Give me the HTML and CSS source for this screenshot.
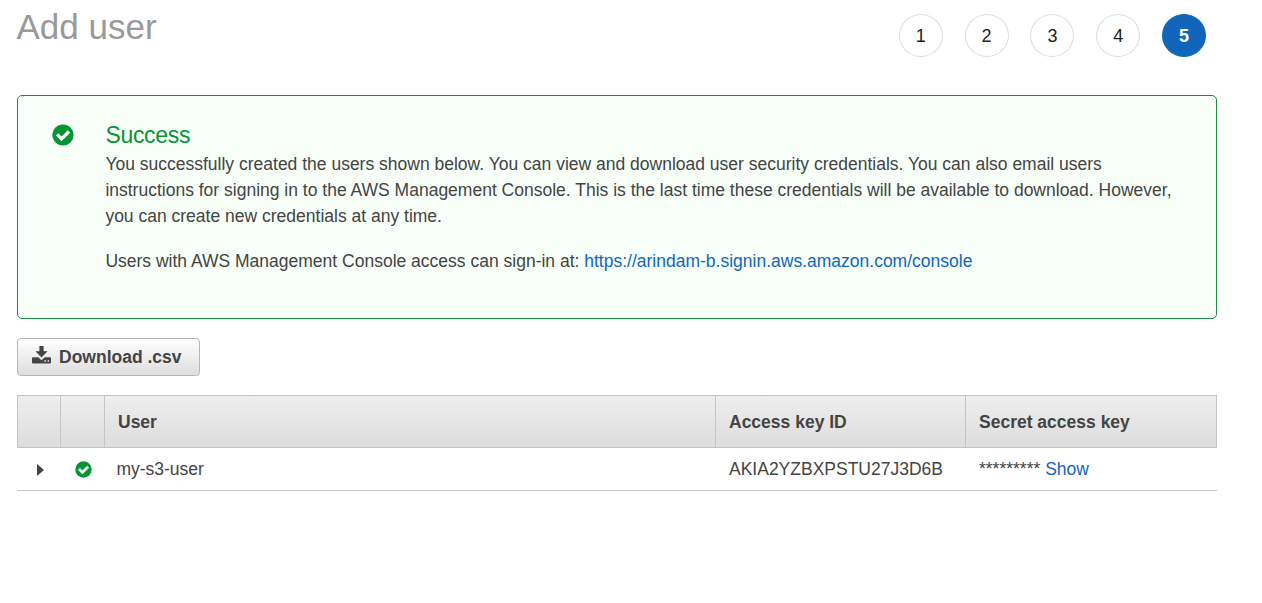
FILE: index.html
```html
<!DOCTYPE html>
<html lang="en">
<head>
<meta charset="utf-8">
<title>Add user</title>
<link rel="stylesheet" href="styles.css">
</head>
<body>
<svg class="defs" width="0" height="0" aria-hidden="true">
  <symbol id="check" viewBox="0 0 22 22">
    <circle cx="11" cy="11" r="10.6" fill="#069535"/>
    <path d="M5.1 10.4 9.6 14.9 17 7.5" fill="none" stroke="#fff" stroke-width="3.4"/>
  </symbol>
</svg>
<main class="page">
  <header class="header">
    <h1 class="title">Add user</h1>
    <ol class="steps">
      <li class="step">1</li>
      <li class="step">2</li>
      <li class="step">3</li>
      <li class="step">4</li>
      <li class="step active">5</li>
    </ol>
  </header>
  <section class="alert">
    <svg class="alert-icon"><use href="#check"/></svg>
    <div class="alert-body">
      <h2 class="alert-title">Success</h2>
      <p class="text">You successfully created the users shown below. You can view and download user security credentials. You can also email users<br>instructions for signing in to the AWS Management Console. This is the last time these credentials will be available to download. However,<br>you can create new credentials at any time.</p>
      <p class="text">Users with AWS Management Console access can sign-in at: <a class="link" href="#">https://arindam-b.signin.aws.amazon.com/console</a></p>
    </div>
  </section>
  <button class="download" type="button">
    <svg class="download-icon" viewBox="0 0 19 18"><path fill="#444" fill-rule="evenodd" d="M7.4 0h4.2v5.2h4L9.5 11.4 3.4 5.2h4zM1 11.2h5.2L9.5 14.2l3.3-3H18q1 0 1 1v4.3q0 1-1 1H1q-1 0-1-1v-4.3q0-1 1-1zM12.4 14.3v1.5h1.5v-1.5zM15.6 14.3v1.5h1.5v-1.5z"/></svg>
    <span class="download-label">Download .csv</span>
  </button>
  <table class="users">
    <colgroup><col class="c-expand"><col class="c-status"><col class="c-user"><col class="c-key"><col class="c-secret"></colgroup>
    <thead><tr><th></th><th></th><th>User</th><th>Access key ID</th><th>Secret access key</th></tr></thead>
    <tbody><tr>
      <td class="icon-cell"><svg class="caret" viewBox="0 0 7 12"><path d="M0 0 7 6 0 12z" fill="#444"/></svg></td>
      <td class="icon-cell"><svg class="status"><use href="#check"/></svg></td>
      <td class="name">my-s3-user</td>
      <td>AKIA2YZBXPSTU27J3D6B</td>
      <td>********* <a class="link" href="#">Show</a></td>
    </tr></tbody>
  </table>
</main>
</body>
</html>
```
FILE: styles.css
```css
* { box-sizing: border-box; }
body { margin: 0; background: #fff; color: #444; font: 17.5px/26px "Liberation Sans", Arial, sans-serif; overflow: hidden; }
.defs { position: absolute; }
.page { width: 1200px; margin-left: 17px; }
.header { display: flex; justify-content: space-between; height: 95px; padding-right: 11px; }
.title { margin: 7px 0 0 -0.5px; font-size: 35px; line-height: 40px; font-weight: 400; color: #999; }
.steps { display: flex; gap: 21.8px; margin: 14px 0 0; padding: 0; list-style: none; }
.step { width: 44px; height: 43px; border: 1px solid #ddd; border-radius: 50%; color: #222; font-size: 18px; line-height: 42px; text-align: center; }
.step.active { background: #1166bb; border-color: #1166bb; color: #fff; font-weight: 700; }
.alert { display: flex; height: 224px; padding: 24px 34px 0; border: 1px solid #1d8a42; border-radius: 5px; background: #f7fff8; }
.alert-icon { width: 22px; height: 22px; margin-top: 4px; flex: none; }
.alert-body { margin-left: 31.4px; white-space: nowrap; }
.alert-title { margin: 0 0 1px; font-size: 23px; line-height: 30px; font-weight: 400; color: #069535; letter-spacing: -0.3px; }
.text { margin: 0 0 19px; }
.link { color: #1166bb; text-decoration: none; }
.download { display: flex; align-items: center; width: 183px; height: 38px; margin: 19px 0; padding: 0 0 0 14px; border: 1px solid #b8b8b8; border-radius: 4px; background: linear-gradient(#fff, #ddd); color: #444; font: inherit; font-weight: 700; white-space: nowrap; }
.download-icon { width: 19px; height: 18px; margin: 0 8px 4px 0; flex: none; }
.users { width: 1200px; table-layout: fixed; border-collapse: separate; border-spacing: 0; }
.c-expand { width: 43px; }
.c-status { width: 44px; }
.c-user { width: 611px; }
.c-key { width: 250px; }
.c-secret { width: 252px; }
.users th { height: 53px; padding: 0 13px; border: solid #c4c4c4; border-width: 1px 0 1px 1px; background: linear-gradient(#eee, #ddd); text-align: left; font-weight: 700; }
.users th:last-child { border-right-width: 1px; }
.users td { height: 43px; padding: 0 14px; border-bottom: 1px solid #c8c8c8; white-space: nowrap; }
.users td.name { padding-left: 12.4px; }
.users td.icon-cell { padding: 1px 0 0 3px; text-align: center; line-height: 0; }
.caret { width: 7px; height: 12px; }
.status { width: 17px; height: 17px; }
```
